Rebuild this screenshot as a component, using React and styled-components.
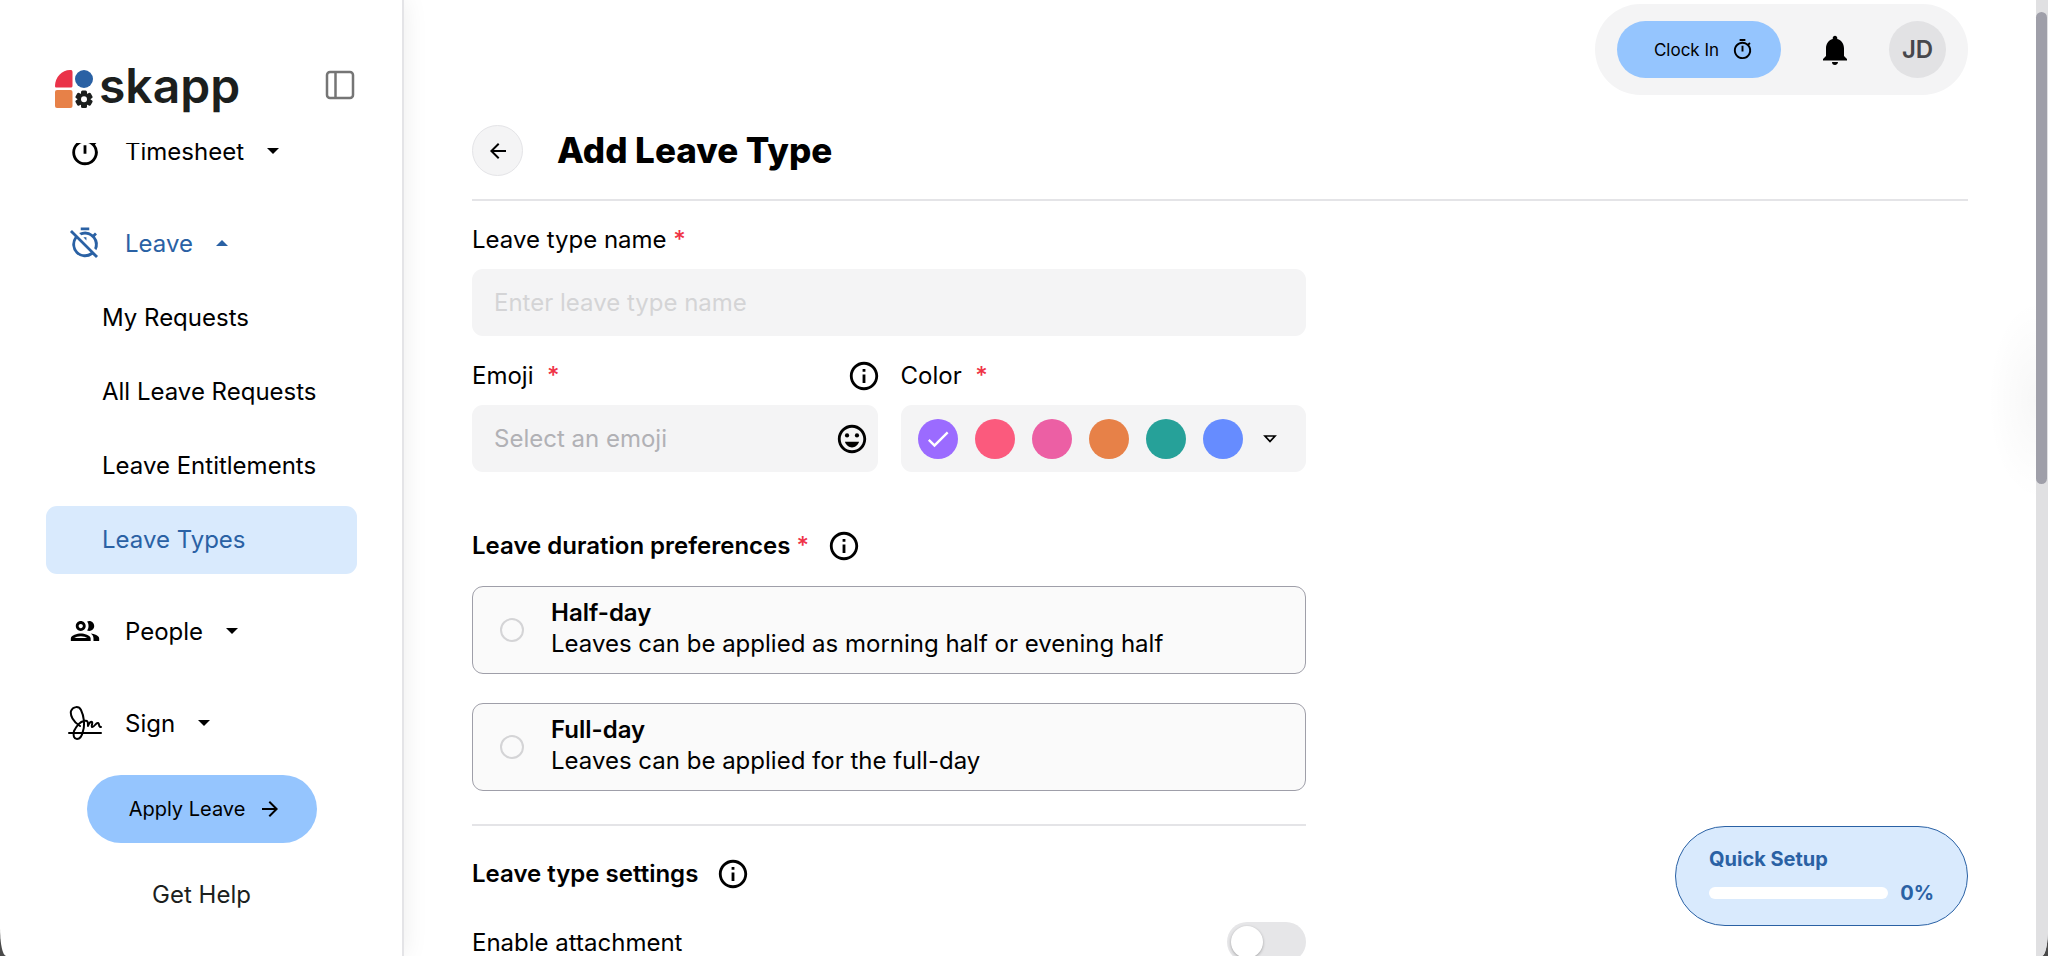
import { useState } from 'react';
import styled, { createGlobalStyle } from 'styled-components';
import {
  MdOutlineTimer,
  MdOutlineTimerOff,
  MdOutlineGroup,
  MdInfoOutline,
  MdOutlineEmojiEmotions,
  MdNotifications,
  MdCheck,
  MdArrowBack,
  MdArrowForward,
} from 'react-icons/md';

const colors = ['#9b6bff', '#fb5a7d', '#ec5fa4', '#e78148', '#26a199', '#668cff'];

const durations = [
  { id: 'half', title: 'Half-day', text: 'Leaves can be applied as morning half or evening half' },
  { id: 'full', title: 'Full-day', text: 'Leaves can be applied for the full-day' },
];

const leaveLinks = ['My Requests', 'All Leave Requests', 'Leave Entitlements', 'Leave Types'];

const Caret = ({ up }) => (
  <svg width="12" height="6" viewBox="0 0 12 6" aria-hidden="true">
    <path d={up ? 'M0 6 6 0l6 6z' : 'M0 0h12L6 6z'} fill="currentColor" />
  </svg>
);

const SignIcon = () => (
  <svg viewBox="0 0 34 34" fill="none" stroke="currentColor" strokeWidth="2" strokeLinecap="round" strokeLinejoin="round" aria-hidden="true">
    <path d="M1 27h32" />
    <path d="M12 20C5 16 2 9 3 5c2-5 8-5 10-1 3 6 4 15 2 21-1 5-3 8-6 8s-4-3-3-8c2-4 5-9 10-10 4-1 4 1 4 5 1-3 3-5 4-4s-1 4 0 5c2 1 4-5 6-4s0 4 3 4" />
  </svg>
);

const Logo = () => (
  <LogoLink href="#home" aria-label="skapp">
    <svg width="38" height="38" viewBox="0 0 38 38" aria-hidden="true">
      <path d="M0 16C0 7 7 0 15 0c2 0 2.500.5 2.500 2.500v13c0 1.500-.5 2-2 2h-14C.5 17.500 0 17 0 16z" fill="#ea3349" />
      <circle cx="29" cy="9" r="9" fill="#2a61a4" />
      <rect y="20" width="17.500" height="18" rx="2" fill="#e78148" />
      <g fill="#1c1f1e">
        <rect x="26" y="20.500" width="6" height="17.500" rx="1.500" />
        <rect x="26" y="20.500" width="6" height="17.500" rx="1.500" transform="rotate(60 29 29.250)" />
        <rect x="26" y="20.500" width="6" height="17.500" rx="1.500" transform="rotate(120 29 29.250)" />
        <circle cx="29" cy="29.250" r="6.500" />
      </g>
      <circle cx="29" cy="29.250" r="3" fill="#fff" />
    </svg>
    <span>skapp</span>
  </LogoLink>
);

const App = () => {
  const [name, setName] = useState('');
  const [emoji, setEmoji] = useState('');
  const [color, setColor] = useState(colors[0]);
  const [duration, setDuration] = useState('');
  const [attachment, setAttachment] = useState(false);
  const progress = 0;

  return (
    <Page>
      <GlobalStyle />
      <Sidebar>
        <SidebarTop>
          <Logo />
          <IconButton type="button" aria-label="Collapse menu">
            <svg width="30" height="30" viewBox="0 0 30 30" fill="none" stroke="#757575" strokeWidth="2.500">
              <rect x="2" y="2" width="26" height="26" rx="3" />
              <path d="M10.500 2v26" />
            </svg>
          </IconButton>
        </SidebarTop>

        <Nav>
          <NavItem type="button"><MdOutlineTimer /><span>Timesheet</span><Caret /></NavItem>
          <NavGroup>
            <NavItem type="button" $active><MdOutlineTimerOff /><span>Leave</span><Caret up /></NavItem>
            {leaveLinks.map((link) => (
              <SubLink key={link} href="#leave" $selected={link === 'Leave Types'}>{link}</SubLink>
            ))}
          </NavGroup>
          <NavItem type="button"><MdOutlineGroup /><span>People</span><Caret /></NavItem>
          <NavItem type="button"><SignIcon /><span>Sign</span><Caret /></NavItem>
        </Nav>

        <ApplyButton type="button">Apply Leave <MdArrowForward /></ApplyButton>
        <HelpLink href="#help">Get Help</HelpLink>
      </Sidebar>

      <Main>
        <TopBar>
          <ClockButton type="button">Clock In <MdOutlineTimer /></ClockButton>
          <IconButton type="button" aria-label="Notifications"><MdNotifications size={36} /></IconButton>
          <Avatar type="button">JD</Avatar>
        </TopBar>

        <Header>
          <BackButton type="button" aria-label="Back"><MdArrowBack /></BackButton>
          <h1>Add Leave Type</h1>
        </Header>

        <Form>
          <Label htmlFor="name">Leave type name <Star>*</Star></Label>
          <Field>
            <Input id="name" placeholder="Enter leave type name" value={name} onChange={(e) => setName(e.target.value)} />
          </Field>

          <Columns>
            <div>
              <LabelRow>
                <Label htmlFor="emoji">Emoji &nbsp;<Star>*</Star></Label>
                <InfoIcon />
              </LabelRow>
              <Field>
                <Input id="emoji" $dark placeholder="Select an emoji" value={emoji} onChange={(e) => setEmoji(e.target.value)} />
                <MdOutlineEmojiEmotions size={34} />
              </Field>
            </div>
            <div>
              <LabelRow>
                <Label as="span" id="color">Color &nbsp;<Star>*</Star></Label>
              </LabelRow>
              <Field role="radiogroup" aria-labelledby="color">
                <Swatches>
                  {colors.map((c) => (
                    <Swatch key={c} $color={c}>
                      <input type="radio" name="color" aria-label={c} checked={color === c} onChange={() => setColor(c)} />
                      {color === c && <MdCheck size={28} />}
                    </Swatch>
                  ))}
                  <IconButton type="button" aria-label="More colors">
                    <svg width="14" height="8" viewBox="0 0 14 8" fill="none" stroke="#000" strokeWidth="1.700">
                      <path d="M2 1h10L7 6.500z" />
                    </svg>
                  </IconButton>
                </Swatches>
              </Field>
            </div>
          </Columns>

          <SectionTitle>
            <h2>Leave duration preferences <Star>*</Star></h2>
            <InfoIcon />
          </SectionTitle>
          <Options>
            {durations.map((d) => (
              <Option key={d.id}>
                <input type="radio" name="duration" checked={duration === d.id} onChange={() => setDuration(d.id)} />
                <span>
                  <strong>{d.title}</strong>
                  {d.text}
                </span>
              </Option>
            ))}
          </Options>

          <Divider />
          <SectionTitle $compact>
            <h2>Leave type settings</h2>
            <InfoIcon />
          </SectionTitle>
          <SwitchRow>
            <span>Enable attachment</span>
            <Switch type="checkbox" role="switch" checked={attachment} onChange={(e) => setAttachment(e.target.checked)} />
          </SwitchRow>
        </Form>
      </Main>

      <Scrollbar><span /></Scrollbar>

      <QuickSetup type="button">
        <strong>Quick Setup</strong>
        <Progress>
          <Track><span style={{ width: `${progress}%` }} /></Track>
          <strong>{progress}%</strong>
        </Progress>
      </QuickSetup>
    </Page>
  );
};

const GlobalStyle = createGlobalStyle`
  * {
    box-sizing: border-box;
  }

  body {
    margin: 0;
    overflow: hidden;
    background: #4a4a4a;
  }

  body, button, input {
    font-family: Inter, 'Liberation Sans', sans-serif;
    font-size: 24px;
    color: #000;
  }

  button {
    padding: 0;
    border: none;
    background: none;
    cursor: pointer;
  }

  h1, h2 {
    margin: 0;
  }
`;
const Page = styled.div`
  display: flex;
  height: 100vh;
  overflow: hidden;
  background: #fff;
  border-radius: 0 0 6px 6px / 0 0 28px 28px;
`;
const Sidebar = styled.aside`
  display: flex;
  flex-direction: column;
  flex: 0 0 404px;
  padding: 66px 45px 44px 46px;
  border-right: 2px solid #e4e4e7;
  box-shadow: 0 0 24px rgba(0, 0, 0, 0.08);
`;
const SidebarTop = styled.div`
  display: flex;
  flex: 0 0 77px;
  align-items: flex-start;
  justify-content: space-between;
  padding: 4px 2px 0 9px;
`;
const LogoLink = styled.a`
  display: flex;
  gap: 6px;
  color: #1c1f1e;
  text-decoration: none;

  span {
    font-size: 48px;
    font-weight: 600;
    line-height: 32px;
  }
`;
const IconButton = styled.button`
  display: flex;
`;
const Nav = styled.nav`
  display: flex;
  flex-direction: column;
  flex: 1;
  justify-content: flex-end;
  gap: 24px;
  min-height: 0;
  overflow: hidden;
`;
const NavGroup = styled.div`
  display: flex;
  flex-direction: column;
  gap: 6px;
`;
const NavItem = styled.button`
  display: flex;
  flex: 0 0 68px;
  align-items: center;
  height: 68px;
  padding: 0 22px 2px;
  color: ${(props) => (props.$active ? '#2a61a4' : '#000')};

  > svg:first-child {
    width: 34px;
    height: 34px;
  }

  span {
    margin: 0 23px;
  }
`;
const SubLink = styled.a`
  display: flex;
  flex: 0 0 68px;
  align-items: center;
  height: 68px;
  padding: 0 0 2px 56px;
  border-radius: 11px;
  white-space: nowrap;
  text-decoration: none;
  color: ${(props) => (props.$selected ? '#2a61a4' : '#000')};
  background: ${(props) => (props.$selected ? '#d9eafd' : 'transparent')};
`;
const ApplyButton = styled.button`
  display: flex;
  align-items: center;
  justify-content: center;
  gap: 13px;
  align-self: center;
  width: 230px;
  height: 68px;
  margin: 17px 0 35px;
  padding-left: 8px;
  border-radius: 34px;
  font-size: 20px;
  background: #95c5fe;

  svg {
    width: 24px;
    height: 24px;
  }
`;
const HelpLink = styled.a`
  align-self: center;
  line-height: 34px;
  text-decoration: none;
  color: #1c1f1e;
`;
const Main = styled.main`
  display: flex;
  flex-direction: column;
  flex: 1;
  min-width: 0;
  padding: 4px 68px 0;
  overflow: hidden;
  background: radial-gradient(48px 100px at 100% 400px, rgba(0, 0, 0, 0.03), transparent);
`;
const TopBar = styled.div`
  display: flex;
  flex-shrink: 0;
  align-self: flex-end;
  align-items: center;
  gap: 36px;
  padding: 17px 22px;
  border-radius: 46px;
  background: #f4f4f5;
`;
const ClockButton = styled.button`
  display: flex;
  align-items: center;
  justify-content: center;
  gap: 12px;
  width: 164px;
  height: 57px;
  padding-left: 10px;
  border-radius: 29px;
  font-size: 17px;
  background: #95c5fe;

  svg {
    width: 23px;
    height: 23px;
  }
`;
const Avatar = styled.button`
  width: 57px;
  height: 57px;
  border-radius: 50%;
  font-size: 24px;
  font-weight: 600;
  color: #47474b;
  background: #e2e2e4;
`;
const Header = styled.header`
  display: flex;
  flex-shrink: 0;
  align-items: center;
  gap: 34px;
  margin-top: 30px;
  padding-bottom: 23px;
  border-bottom: 2px solid #e4e4e7;

  h1 {
    font-size: 35px;
    font-weight: 800;
    line-height: 51px;
  }
`;
const BackButton = styled.button`
  display: flex;
  align-items: center;
  justify-content: center;
  width: 51px;
  height: 51px;
  border: 1px solid #e4e4e7;
  border-radius: 50%;
  background: #f4f4f5;

  svg {
    width: 24px;
    height: 24px;
  }
`;
const Form = styled.form`
  display: flex;
  flex-direction: column;
  flex-shrink: 0;
  width: 834px;
  max-width: 100%;
  padding-top: 22px;
`;
const Label = styled.label`
  line-height: 34px;
`;
const Star = styled.span`
  font-weight: 500;
  color: #ef3347;
`;
const LabelRow = styled.div`
  display: flex;
  align-items: center;
  justify-content: space-between;
  height: 34px;
`;
const Info = styled(MdInfoOutline)`
  width: 34px;
  height: 34px;
  margin-right: -3px;
`;
const InfoIcon = () => <Info aria-hidden="true" />;
const Field = styled.div`
  display: flex;
  align-items: center;
  height: 67px;
  margin-top: 12px;
  padding: 0 9px 0 22px;
  border-radius: 11px;
  background: #f4f4f5;

  > svg {
    flex-shrink: 0;
  }
`;
const Input = styled.input`
  flex: 1;
  min-width: 0;
  padding: 0;
  border: none;
  outline: none;
  background: none;

  &::placeholder {
    color: ${(props) => (props.$dark ? '#b1b1b5' : '#d4d4d6')};
  }
`;
const Columns = styled.div`
  display: grid;
  grid-template-columns: repeat(2, minmax(0, 1fr));
  gap: 23px;
  margin-top: 23px;
`;
const Swatches = styled.div`
  display: flex;
  align-items: center;
  gap: 17px;
  margin-left: -5px;

  > button {
    margin-left: 3px;
  }
`;
const Swatch = styled.label`
  display: flex;
  align-items: center;
  justify-content: center;
  width: 40px;
  height: 40px;
  border-radius: 50%;
  color: #fff;
  cursor: pointer;
  background: ${(props) => props.$color};

  input {
    appearance: none;
    position: absolute;
    margin: 0;
  }
`;
const SectionTitle = styled.div`
  display: flex;
  align-items: center;
  gap: 18px;
  margin-top: ${(props) => (props.$compact ? '31px' : '57px')};

  h2 {
    font-size: 24px;
    font-weight: 600;
    line-height: 34px;
  }
`;
const Options = styled.div`
  display: grid;
  gap: 29px;
  margin-top: 23px;
`;
const Option = styled.label`
  display: flex;
  align-items: center;
  gap: 27px;
  height: 88px;
  padding: 0 27px;
  border: 1px solid #9f9fa9;
  border-radius: 11px;
  background: #fafafa;
  line-height: 31px;

  > span {
    padding-bottom: 4px;
  }

  input {
    appearance: none;
    width: 24px;
    height: 24px;
    margin: 0;
    border: 2px solid #d4d4d6;
    border-radius: 50%;
  }

  input:checked {
    border: 7px solid #2a61a4;
  }

  strong {
    display: block;
    font-weight: 600;
  }
`;
const Divider = styled.hr`
  width: 100%;
  margin: 33px 0 0;
  border: none;
  border-top: 2px solid #e4e4e7;
`;
const SwitchRow = styled.label`
  display: flex;
  align-items: center;
  justify-content: space-between;
  margin-top: 31px;
`;
const Switch = styled.input`
  appearance: none;
  display: flex;
  width: 79px;
  height: 40px;
  margin: 0;
  padding: 4px;
  border-radius: 20px;
  background: #e6e6e8;

  &::before {
    content: '';
    width: 32px;
    height: 32px;
    border-radius: 50%;
    background: #fff;
    box-shadow: 0 1px 3px rgba(0, 0, 0, 0.3);
  }

  &:checked {
    justify-content: flex-end;
    background: #2a61a4;
  }
`;
const Scrollbar = styled.div`
  flex: 0 0 12px;
  padding: 12px 1px 0 0;
  background: #e0e0e2;

  span {
    display: block;
    height: 50%;
    border-radius: 6px;
    background: #9f9fa9;
  }
`;
const QuickSetup = styled.button`
  position: fixed;
  right: 80px;
  bottom: 30px;
  display: flex;
  flex-direction: column;
  justify-content: center;
  gap: 8px;
  width: 293px;
  height: 100px;
  padding: 0 33px;
  border: 1px solid #2a61a4;
  border-radius: 50px;
  text-align: left;
  background: #d9eafd;

  strong {
    font-size: 20px;
    font-weight: 700;
    line-height: 26px;
    color: #2a61a4;
  }
`;
const Progress = styled.span`
  display: flex;
  align-items: center;
  gap: 12px;
  width: 100%;
`;
const Track = styled.span`
  flex: 1;
  height: 12px;
  border-radius: 6px;
  background: #fff;

  span {
    display: block;
    height: 100%;
    border-radius: 6px;
    background: #2a61a4;
  }
`;

export default App;
